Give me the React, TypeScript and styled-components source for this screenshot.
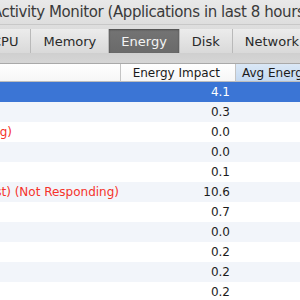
import styled, { createGlobalStyle } from 'styled-components';

const GlobalStyle = createGlobalStyle`
	html, body {
		margin: 0;
		padding: 0;
		background: #ffffff;
	}
	body {
		width: 300px;
		height: 300px;
		overflow: hidden;
		font-family: 'DejaVu Sans', 'Noto Sans', sans-serif;
	}
`;

const Window = styled.div`
	width: 300px;
	height: 300px;
	overflow: hidden;
	display: flex;
	flex-direction: column;
	background: #ffffff;
`;

const TitleBar = styled.div`
	height: 24px;
	flex-shrink: 0;
	background: linear-gradient(#e9e9e9, #dedede);
	color: #3a3a3a;
	font-size: 15px;
	letter-spacing: -0.42px;
	line-height: 25px;
	white-space: nowrap;
	margin-left: -8px;
`;

const Toolbar = styled.div`
	height: 29px;
	flex-shrink: 0;
	box-sizing: border-box;
	padding-top: 4px;
	background: linear-gradient(#dedede, #d2d2d2);
	border-top: 1px solid #c8c8c8;
	display: flex;
`;

const Tabs = styled.div`
	display: flex;
	height: 24px;
	margin-left: -20px;
	background: linear-gradient(#ececec, #d9d9d9);
	border-bottom: 1px solid #b2b2b2;
`;

const Tab = styled.div<{ $active?: boolean }>`
	display: flex;
	align-items: center;
	padding: 0 12px;
	font-size: 13px;
	white-space: nowrap;
	color: ${(p) => (p.$active ? '#f4f4f4' : '#2a2a2a')};
	background: ${(p) => (p.$active ? 'linear-gradient(#747474, #6a6a6a)' : 'transparent')};
	box-shadow: ${(p) => (p.$active ? 'inset 0 1px 2px rgba(0,0,0,0.35)' : 'none')};
	& + & {
		border-left: 1px solid #b9b9b9;
	}
`;

const Strip = styled.div`
	height: 10px;
	flex-shrink: 0;
	background: linear-gradient(#cfcfcf, #d6d6d6);
	border-bottom: 1px solid #a9a9a9;
`;

const Grid = styled.div`
	display: grid;
	grid-template-columns: 120px 115px 1fr;
	grid-template-rows: 18px;
	grid-auto-rows: 20px;
	font-size: 12px;
	color: #1c1c1c;
`;

const HeaderCell = styled.div<{ $sorted?: boolean; $align?: string }>`
	box-sizing: border-box;
	display: flex;
	align-items: center;
	justify-content: ${(p) => p.$align || 'flex-start'};
	padding: ${(p) => (p.$align === 'flex-end' ? '0 15px 0 6px' : '0 6px')};
	font-size: 12px;
	white-space: nowrap;
	overflow: hidden;
	color: #1a1a1a;
	background: ${(p) => (p.$sorted ? 'linear-gradient(#dbe8f6, #c4d9f1)' : 'linear-gradient(#ffffff, #f6f6f6)')};
	border-bottom: 1px solid #bdbdbd;
	& + & {
		border-left: 1px solid #c4c4c4;
	}
`;

const Row = styled.div<{ $index: number; $selected?: boolean }>`
	display: contents;
	& > div {
		background: ${(p) => (p.$selected ? '#3b75d5' : p.$index % 2 === 1 ? '#f2f5fa' : '#ffffff')};
		color: ${(p) => (p.$selected ? '#ffffff' : '#1c1c1c')};
	}
`;

const NameCell = styled.div<{ $warn?: boolean }>`
	display: flex;
	align-items: center;
	justify-content: flex-end;
	white-space: nowrap;
	overflow: hidden;
	&& {
		color: ${(p) => (p.$warn ? '#f5332a' : 'inherit')};
	}
`;

const ValueCell = styled.div`
	display: flex;
	align-items: center;
	justify-content: flex-end;
	padding-right: 5px;
`;

const EmptyCell = styled.div``;

const rows = [
	{ name: '', value: '4.1' },
	{ name: '', value: '0.3' },
	{ name: 'Microsoft Word (Not Responding)', value: '0.0', warn: true, end: 108 },
	{ name: '', value: '0.0' },
	{ name: '', value: '0.1' },
	{ name: 'Google Chrome Helper (Host) (Not Responding)', value: '10.6', warn: true, end: 1 },
	{ name: '', value: '0.7' },
	{ name: '', value: '0.0' },
	{ name: '', value: '0.2' },
	{ name: '', value: '0.2' },
	{ name: '', value: '0.2' },
];

export default function App() {
	return (
		<>
			<GlobalStyle />
			<Window>
				<TitleBar>Activity Monitor (Applications in last 8 hours)</TitleBar>
				<Toolbar>
					<Tabs>
						<Tab>CPU</Tab>
						<Tab>Memory</Tab>
						<Tab $active>Energy</Tab>
						<Tab>Disk</Tab>
						<Tab>Network</Tab>
					</Tabs>
				</Toolbar>
				<Strip />
				<Grid>
					<HeaderCell />
					<HeaderCell $align="flex-end">Energy Impact</HeaderCell>
					<HeaderCell $sorted>Avg Energy Impact</HeaderCell>
					{rows.map((r, i) => (
						<Row key={i} $index={i} $selected={i === 0}>
							<NameCell $warn={r.warn} style={{ paddingRight: r.end ?? 0 }}>
								{r.name}
							</NameCell>
							<ValueCell>{r.value}</ValueCell>
							<EmptyCell />
						</Row>
					))}
				</Grid>
			</Window>
		</>
	);
}
